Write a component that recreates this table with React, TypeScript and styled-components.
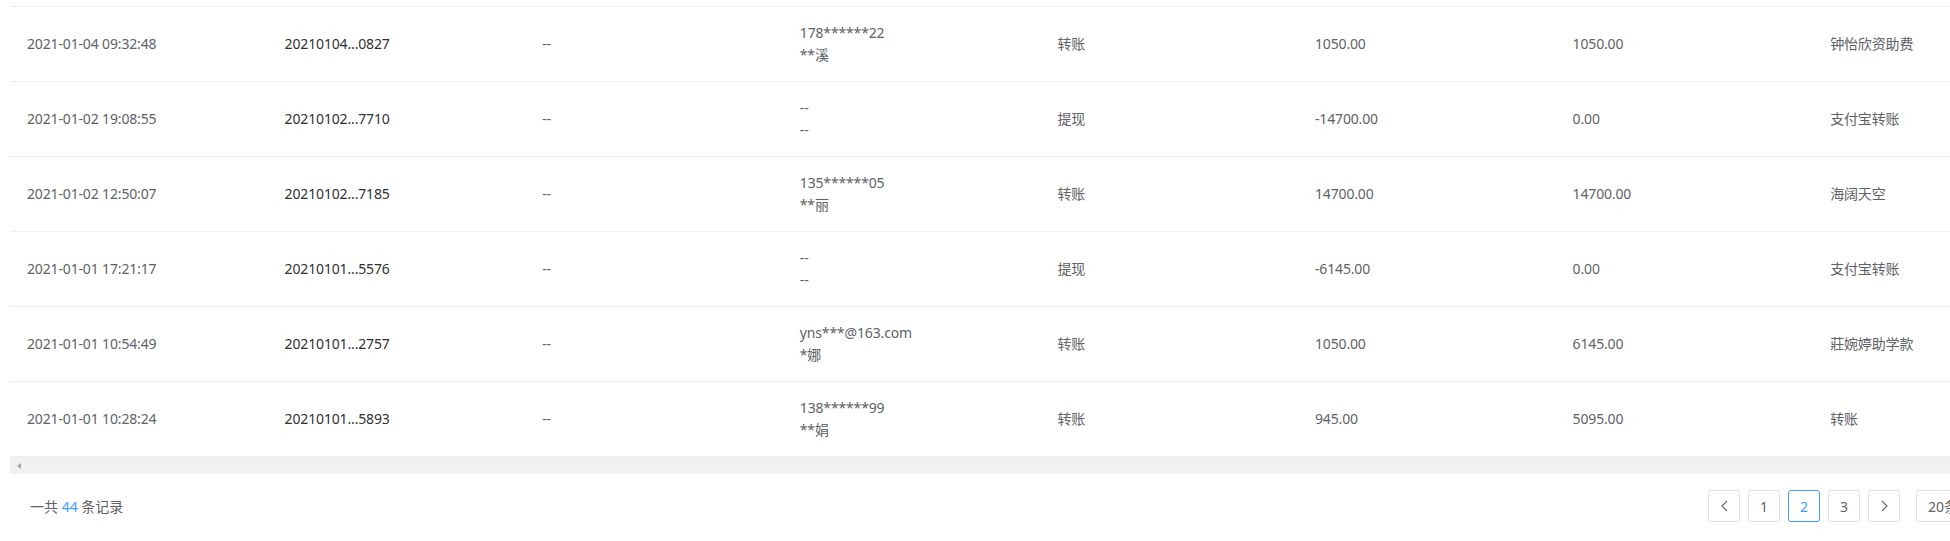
import { createGlobalStyle, styled } from "styled-components";

const GlobalStyle = createGlobalStyle`
  html, body {
    margin: 0;
    padding: 0;
    overflow: hidden;
    background: #fff;
  }
  body {
    font-family: "Noto Sans", "Noto Sans CJK SC", sans-serif;
    font-size: 14px;
    color: #606266;
  }
`;

const Page = styled.div`
  width: 2060px;
  padding: 6px 0 0 10px;
`;

const Table = styled.div`
  border-top: 1px solid #ebeef5;
`;

const Row = styled.div`
  display: grid;
  grid-template-columns: repeat(8, 257.6px);
  height: 74px;
  border-bottom: 1px solid #ebeef5;
`;

const Cell = styled.div<{ $dark?: boolean }>`
  display: flex;
  flex-direction: column;
  justify-content: center;
  padding-left: 17px;
  line-height: 22px;
  white-space: nowrap;
  letter-spacing: -0.15px;
  color: ${(p) => (p.$dark ? "#303133" : "#606266")};
`;

const Scrollbar = styled.div`
  height: 17px;
  background: #f1f1f1;
  display: flex;
  align-items: center;
  padding-left: 7px;
`;

const ArrowLeft = styled.span`
  width: 0;
  height: 0;
  border-top: 3px solid transparent;
  border-bottom: 3px solid transparent;
  border-right: 4px solid #a3a3a3;
`;

const Footer = styled.div`
  display: flex;
  align-items: center;
  justify-content: space-between;
  padding: 16px 54px 16px 20px;
`;

const Total = styled.span`
  color: #606266;
`;

const Count = styled.span`
  color: #409eff;
`;

const Pager = styled.div`
  display: flex;
  align-items: center;
  gap: 8px;
`;

const PageButton = styled.button<{ $active?: boolean }>`
  all: unset;
  box-sizing: border-box;
  width: 32px;
  height: 32px;
  display: flex;
  align-items: center;
  justify-content: center;
  border: 1px solid ${(p) => (p.$active ? "#409eff" : "#dcdfe6")};
  border-radius: 3px;
  font-family: "Noto Sans", sans-serif;
  font-size: 14px;
  color: ${(p) => (p.$active ? "#409eff" : "#606266")};
  background: #fff;
`;

const SizeSelect = styled.div`
  box-sizing: border-box;
  margin-left: 8px;
  width: 100px;
  height: 32px;
  display: flex;
  align-items: center;
  justify-content: space-between;
  padding: 0 10px 0 11px;
  border: 1px solid #dcdfe6;
  border-radius: 3px;
  color: #606266;
`;

type Record = {
  time: string;
  no: string;
  ref: string;
  account: [string, string];
  kind: string;
  amount: string;
  balance: string;
  note: string;
};

const records: Record[] = [
  { time: "2021-01-04 09:32:48", no: "20210104...0827", ref: "--", account: ["178******22", "**溪"], kind: "转账", amount: "1050.00", balance: "1050.00", note: "钟怡欣资助费" },
  { time: "2021-01-02 19:08:55", no: "20210102...7710", ref: "--", account: ["--", "--"], kind: "提现", amount: "-14700.00", balance: "0.00", note: "支付宝转账" },
  { time: "2021-01-02 12:50:07", no: "20210102...7185", ref: "--", account: ["135******05", "**丽"], kind: "转账", amount: "14700.00", balance: "14700.00", note: "海阔天空" },
  { time: "2021-01-01 17:21:17", no: "20210101...5576", ref: "--", account: ["--", "--"], kind: "提现", amount: "-6145.00", balance: "0.00", note: "支付宝转账" },
  { time: "2021-01-01 10:54:49", no: "20210101...2757", ref: "--", account: ["yns***@163.com", "*娜"], kind: "转账", amount: "1050.00", balance: "6145.00", note: "莊婉婷助学款" },
  { time: "2021-01-01 10:28:24", no: "20210101...5893", ref: "--", account: ["138******99", "**娟"], kind: "转账", amount: "945.00", balance: "5095.00", note: "转账" },
];

const Chevron = ({ dir }: { dir: "left" | "right" | "down" }) => {
  const pts = dir === "left" ? "6,1 1,6 6,11" : dir === "right" ? "1,1 6,6 1,11" : "1,1 6,6 11,1";
  const w = dir === "down" ? 12 : 7;
  const h = dir === "down" ? 7 : 12;
  return (
    <svg width={w} height={h} viewBox={`0 0 ${w} ${h}`} fill="none">
      <polyline points={pts} stroke="#606266" strokeWidth="1.1" />
    </svg>
  );
};

export default function App() {
  return (
    <>
      <GlobalStyle />
      <Page>
        <Table>
          {records.map((r) => (
            <Row key={r.time}>
              <Cell>{r.time}</Cell>
              <Cell $dark>{r.no}</Cell>
              <Cell>{r.ref}</Cell>
              <Cell>
                <span>{r.account[0]}</span>
                <span>{r.account[1]}</span>
              </Cell>
              <Cell>{r.kind}</Cell>
              <Cell>{r.amount}</Cell>
              <Cell>{r.balance}</Cell>
              <Cell>{r.note}</Cell>
            </Row>
          ))}
        </Table>
        <Scrollbar>
          <ArrowLeft />
        </Scrollbar>
        <Footer>
          <Total>
            一共 <Count>44</Count> 条记录
          </Total>
          <Pager>
            <PageButton>
              <Chevron dir="left" />
            </PageButton>
            <PageButton>1</PageButton>
            <PageButton $active>2</PageButton>
            <PageButton>3</PageButton>
            <PageButton>
              <Chevron dir="right" />
            </PageButton>
            <SizeSelect>
              <span>20条/页</span>
              <Chevron dir="down" />
            </SizeSelect>
          </Pager>
        </Footer>
      </Page>
    </>
  );
}
